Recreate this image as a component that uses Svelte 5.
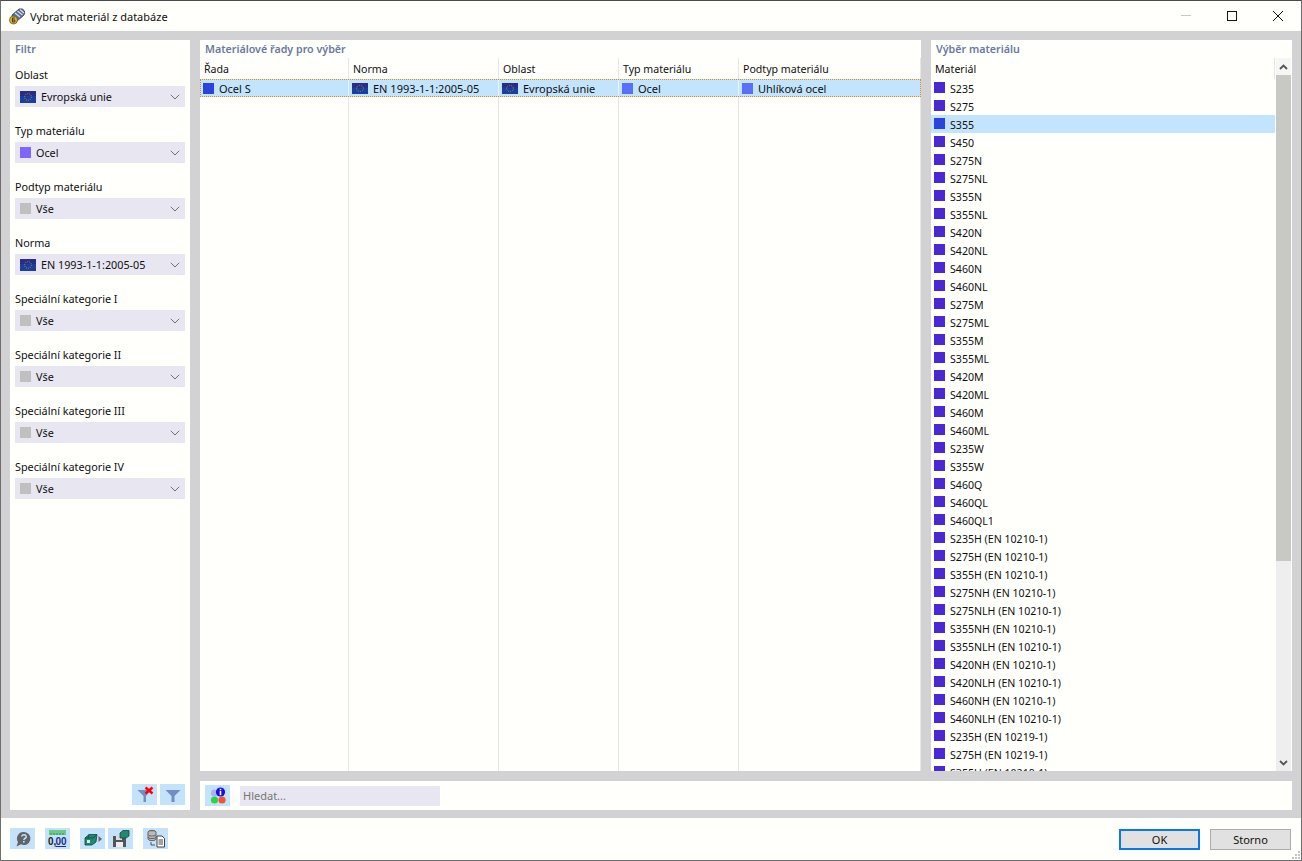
<script lang="ts">
	const filters = [
		{ label: 'Oblast', value: 'Evropská unie', icon: 'flag' },
		{ label: 'Typ materiálu', value: 'Ocel', icon: 'violet' },
		{ label: 'Podtyp materiálu', value: 'Vše', icon: 'grey' },
		{ label: 'Norma', value: 'EN 1993-1-1:2005-05', icon: 'flag' },
		{ label: 'Speciální kategorie I', value: 'Vše', icon: 'grey' },
		{ label: 'Speciální kategorie II', value: 'Vše', icon: 'grey' },
		{ label: 'Speciální kategorie III', value: 'Vše', icon: 'grey' },
		{ label: 'Speciální kategorie IV', value: 'Vše', icon: 'grey' }
	];

	const columns = [
		{ name: 'Řada', width: 149 },
		{ name: 'Norma', width: 150 },
		{ name: 'Oblast', width: 120 },
		{ name: 'Typ materiálu', width: 120 },
		{ name: 'Podtyp materiálu', width: 182 }
	];

	const materials = [
		'S235', 'S275', 'S355', 'S450', 'S275N', 'S275NL', 'S355N', 'S355NL', 'S420N', 'S420NL',
		'S460N', 'S460NL', 'S275M', 'S275ML', 'S355M', 'S355ML', 'S420M', 'S420ML', 'S460M',
		'S460ML', 'S235W', 'S355W', 'S460Q', 'S460QL', 'S460QL1', 'S235H (EN 10210-1)',
		'S275H (EN 10210-1)', 'S355H (EN 10210-1)', 'S275NH (EN 10210-1)', 'S275NLH (EN 10210-1)',
		'S355NH (EN 10210-1)', 'S355NLH (EN 10210-1)', 'S420NH (EN 10210-1)', 'S420NLH (EN 10210-1)',
		'S460NH (EN 10210-1)', 'S460NLH (EN 10210-1)', 'S235H (EN 10219-1)', 'S275H (EN 10219-1)',
		'S355H (EN 10219-1)'
	];
</script>

{#snippet flag(h = 12)}
	<svg class="flag" width="16" height={h} viewBox="0 0 16 12" preserveAspectRatio="none">
		<rect width="16" height="12" fill="#1c3f9e" />
		<rect width="16" height="5" fill="#2a2d86" />
		<circle cx="8" cy="6" r="3.4" fill="none" stroke="#93935c" stroke-width="1" stroke-dasharray="1 1.1" />
	</svg>
{/snippet}

<div class="window">
	<header class="titlebar">
		<svg class="appicon" width="18" height="18" viewBox="0 0 18 18">
			<path d="M4 8 L11 2 Q15 1 16.5 4 Q17.5 7 15 9 L9 14 L5 12 Z" fill="#5d6f92" stroke="#2f3a50" stroke-width="0.8" />
			<path d="M7 6 L12 10 M9.5 4 L14.5 8 M12 2.5 L16 6" stroke="#d7dfee" stroke-width="1.2" />
			<circle cx="5.5" cy="13" r="4" fill="#d9b23a" stroke="#6b5a1e" stroke-width="0.8" />
			<path d="M6.8 11 H4.5 V15 H6.8 V13 H4.5" fill="none" stroke="#453a14" stroke-width="1" />
		</svg>
		<span class="title">Vybrat materiál z databáze</span>
		<div class="winbtns">
			<svg width="12" height="12" viewBox="0 0 12 12"><path d="M1 5.5 H11" stroke="#c8c8c8" /></svg>
			<svg width="12" height="12" viewBox="0 0 12 12"><rect x="1.5" y="1.5" width="9" height="9" fill="none" stroke="#111" /></svg>
			<svg width="12" height="12" viewBox="0 0 12 12"><path d="M1 1 L11 11 M11 1 L1 11" stroke="#111" /></svg>
		</div>
	</header>

	<main class="body">
		<aside class="panel filter">
			<h2>Filtr</h2>
			<div class="filters">
				{#each filters as f}
					<div class="field">
						<span class="label">{f.label}</span>
						<div class="select">
							{#if f.icon === 'flag'}
								{@render flag()}
							{:else}
								<span class="swatch {f.icon}"></span>
							{/if}
							<span class="value">{f.value}</span>
							<svg class="chev" width="10" height="6" viewBox="0 0 10 6"><path d="M0.8 0.8 L5 5 L9.2 0.8" fill="none" stroke="#707070" stroke-width="1" /></svg>
						</div>
					</div>
				{/each}
			</div>
			<div class="filter-tools">
				<button class="tool" aria-label="Zrušit filtr">
					<svg width="20" height="20" viewBox="0 0 20 20">
						<path d="M2.5 5 H16 L11 11 V17 H8.5 V11 Z" fill="#6f8fc4" />
						<path d="M10.5 2.5 L17.5 8.5 M17.5 2.5 L10.5 8.5" stroke="#f00" stroke-width="2.4" />
					</svg>
				</button>
				<button class="tool" aria-label="Filtr">
					<svg width="20" height="20" viewBox="0 0 20 20"><path d="M2.5 5 H17.5 L11.5 11 V17 H8.5 V11 Z" fill="#6f8fc4" /></svg>
				</button>
			</div>
		</aside>

		<section class="panel series">
			<h2>Materiálové řady pro výběr</h2>
			<div class="table">
				<div class="thead">
					{#each columns as c}
						<div class="th" style:width="{c.width}px">{c.name}</div>
					{/each}
				</div>
				<div class="row">
					<div class="td first"><span class="swatch blue"></span><span class="gap">Ocel S</span></div>
					<div class="td" style:width="{columns[1].width}px">{@render flag(11)}<span class="gap">EN 1993-1-1:2005-05</span></div>
					<div class="td" style:width="{columns[2].width}px">{@render flag(11)}<span class="gap">Evropská unie</span></div>
					<div class="td" style:width="{columns[3].width}px"><span class="swatch steel"></span><span class="gap">Ocel</span></div>
					<div class="td last"><span class="swatch steel"></span><span class="gap">Uhlíková ocel</span></div>
				</div>
				<div class="grid-lines">
					{#each columns as c}
						<div class="gl" style:width="{c.width}px"></div>
					{/each}
				</div>
			</div>
		</section>

		<section class="panel picks">
			<h2>Výběr materiálu</h2>
			<div class="picks-body">
				<div class="list">
					<div class="th solo">Materiál</div>
					<div class="items">
						{#each materials as m, i}
							<div class="item" class:sel={i === 2}>
								<span class="swatch {i === 2 ? 'blue' : 'indigo'}"></span>
								<span>{m}</span>
							</div>
						{/each}
					</div>
				</div>
				<div class="scrollbar">
					<div class="sb-btn up">
						<svg width="9" height="6" viewBox="0 0 9 6"><path d="M1 5 L4.5 1.5 L8 5" fill="none" stroke="#555" stroke-width="1.8" /></svg>
					</div>
					<div class="thumb"></div>
					<div class="track"></div>
					<div class="sb-btn">
						<svg width="9" height="6" viewBox="0 0 9 6"><path d="M1 1 L4.5 4.5 L8 1" fill="none" stroke="#555" stroke-width="1.8" /></svg>
					</div>
				</div>
			</div>
		</section>

		<section class="panel search">
			<button class="tool" aria-label="Info">
				<svg width="20" height="20" viewBox="0 0 20 20">
					<circle cx="6.5" cy="7" r="3.6" fill="#a9b4ec" />
					<circle cx="6.5" cy="14" r="3.6" fill="#2fd24a" />
					<circle cx="14" cy="14" r="3.6" fill="#f4552f" />
					<circle cx="12.5" cy="6" r="4.6" fill="#1a0ee0" />
					<rect x="11.7" y="5" width="1.6" height="4.2" fill="#fff" />
					<rect x="11.7" y="2.8" width="1.6" height="1.4" fill="#fff" />
				</svg>
			</button>
			<div class="searchbox">Hledat...</div>
		</section>
	</main>

	<footer class="footer">
		<div class="tools">
			<button class="tool" aria-label="Nápověda">
				<svg width="20" height="20" viewBox="0 0 20 20">
					<path d="M11 3 A6.5 6.5 0 1 1 8 15.3 L3.5 17.5 L5 13 A6.5 6.5 0 0 1 11 3 Z" fill="#5f6468" />
					<path d="M8.8 7.5 A2.2 2 0 1 1 11.4 9.6 L10.8 11" fill="none" stroke="#c4e2fa" stroke-width="1.5" />
					<rect x="10" y="12" width="1.6" height="1.6" fill="#c4e2fa" />
				</svg>
			</button>
			<button class="tool units" aria-label="Jednotky">
				<svg width="22" height="20" viewBox="0 0 22 20">
					<rect x="2" y="1" width="17" height="5" fill="#6cc98a" />
					<path d="M4 4 V6 M7 4 V6 M10 4 V6 M13 4 V6 M16 4 V6" stroke="#3f8f5a" />
					<text x="1" y="15.5" class="num">0,</text>
					<text x="8.5" y="15.5" class="num under">00</text>
					<path d="M8.5 17.5 H19" stroke="#23308c" />
				</svg>
			</button>
			<button class="tool" aria-label="Načíst">
				<svg width="20" height="20" viewBox="0 0 20 20">
					<path d="M2 9 L6 5.5 H14 L13 13 L9 16 H2 Z" fill="#1f8a70" stroke="#10483a" stroke-width="0.8" />
					<path d="M6 5.5 L5 9 H2 M5 9 H10 L13.5 6" fill="none" stroke="#10483a" stroke-width="0.8" />
					<rect x="4" y="11" width="3" height="3" fill="#d8efe8" />
					<path d="M15.5 7 L19 10 L15.5 13 Z" fill="#666" />
				</svg>
			</button>
			<button class="tool" aria-label="Uložit">
				<svg width="20" height="20" viewBox="0 0 20 20">
					<path d="M2 7 H13 L15 9 V18 H2 Z" fill="#555" />
					<rect x="5" y="7" width="6" height="4" fill="#ddd" />
					<rect x="5" y="13" width="7" height="5" fill="#eee" />
					<path d="M9 4 L12 1.5 H18 V7 L15 9 H9 Z" fill="#1f8a70" stroke="#10483a" stroke-width="0.8" />
				</svg>
			</button>
			<button class="tool last" aria-label="Knihovna">
				<svg width="20" height="20" viewBox="0 0 20 20">
					<ellipse cx="6" cy="3" rx="4" ry="1.6" fill="#aaa" stroke="#666" />
					<path d="M2 3 V10 A4 1.6 0 0 0 10 10 V3" fill="#bbb" stroke="#666" />
					<path d="M2 5.5 A4 1.6 0 0 0 10 5.5 M2 8 A4 1.6 0 0 0 10 8" fill="none" stroke="#666" />
					<path d="M5 13 V16 H9" fill="none" stroke="#555" />
					<path d="M11 7 H16 L18.5 9.5 V18 H11 Z" fill="#fff" stroke="#444" />
					<path d="M12.5 11 H17 M12.5 13 H17 M12.5 15 H17" stroke="#444" />
				</svg>
			</button>
		</div>
		<div class="actions">
			<button class="btn ok">OK</button>
			<button class="btn">Storno</button>
		</div>
		<svg class="grip" width="10" height="10" viewBox="0 0 10 10">
			<path d="M7 1h2v2H7z M4 4h2v2H4z M7 4h2v2H7z M1 7h2v2H1z M4 7h2v2H4z M7 7h2v2H7z" fill="#c4c4c4" />
		</svg>
	</footer>
</div>

<style>
	:global(body) {
		margin: 0;
		background: #fff;
	}

	.window {
		width: 1302px;
		height: 861px;
		box-sizing: border-box;
		display: flex;
		flex-direction: column;
		border: 1px solid #6e6e6e;
		border-top-color: #4a4a4a;
		background: #fffffc;
		font-family: 'Noto Sans', 'Open Sans', sans-serif;
		font-size: 11px;
		color: #101010;
		overflow: hidden;
	}

	.titlebar {
		height: 30px;
		flex: none;
		display: flex;
		align-items: center;
		padding-left: 7px;
		gap: 4px;
		background: #fffffc;
	}

	.title {
		font-size: 11px;
	}

	.winbtns {
		margin-left: auto;
		display: flex;
		align-items: center;
		gap: 34px;
		padding-right: 17px;
	}

	.body {
		flex: none;
		background: #d2d2d4;
		padding: 9px 9px 8px;
		display: grid;
		grid-template-columns: 180px 721px 361px;
		grid-template-rows: 731px 29px;
		gap: 10px;
	}

	.panel {
		background: #fffffc;
		min-width: 0;
		min-height: 0;
	}

	h2 {
		margin: 0;
		font-size: 10.7px;
		font-weight: 600;
		color: #6a7a9c;
		line-height: 18px;
		padding-left: 5px;
	}

	.filter {
		grid-row: 1 / 3;
		display: flex;
		flex-direction: column;
		padding-bottom: 5px;
	}

	.filters {
		flex: 1;
		display: flex;
		flex-direction: column;
		gap: 15px;
		padding: 8px 5px 0;
		font-size: 10.8px;
	}

	.label {
		display: block;
		line-height: 18px;
		height: 20px;
	}

	.select {
		height: 21px;
		background: #e8e6f0;
		display: flex;
		align-items: center;
		padding: 0 5px;
		gap: 5px;
	}

	.chev {
		margin-left: auto;
	}

	.flag {
		flex: none;
	}

	.swatch {
		flex: none;
		display: inline-block;
		width: 11px;
		height: 11px;
	}

	.violet {
		background: #7f66ff;
	}

	.grey {
		background: #c0c0c0;
	}

	.blue {
		background: #2a44e0;
	}

	.steel {
		background: #5a70fa;
	}

	.indigo {
		background: #4a28d4;
	}

	.filter-tools {
		display: flex;
		justify-content: flex-end;
		gap: 3px;
		padding-right: 5px;
	}

	.tool {
		width: 25px;
		height: 21px;
		padding: 0;
		border: 0;
		background: #c4e2fa;
		display: flex;
		align-items: center;
		justify-content: center;
		flex: none;
	}

	.series {
		display: flex;
		flex-direction: column;
	}

	.table {
		flex: 1;
		min-height: 0;
		display: flex;
		flex-direction: column;
	}

	.thead {
		display: flex;
		height: 21px;
		flex: none;
	}

	.th {
		box-sizing: border-box;
		padding-left: 4px;
		line-height: 22px;
		font-size: 10.6px;
		border-right: 1px solid #e6e6e6;
	}

	.th.solo {
		height: 21px;
		flex: none;
	}

	.row {
		display: flex;
		box-sizing: border-box;
		height: 18px;
		flex: none;
		background: #c2e4fd;
		border: 1px dotted #e8861e;
	}

	.td {
		box-sizing: border-box;
		display: flex;
		align-items: center;
		padding-left: 3px;
		border-right: 1px solid #eef6fb;
	}

	.td.first {
		width: 148px;
		padding-left: 2px;
	}

	.td.last {
		width: 180px;
		border-right: 0;
	}

	.gap {
		margin-left: 5px;
	}

	.grid-lines {
		flex: 1;
		display: flex;
	}

	.gl {
		box-sizing: border-box;
		border-right: 1px solid #e6e6e6;
	}

	.picks {
		display: flex;
		flex-direction: column;
	}

	.picks-body {
		flex: 1;
		min-height: 0;
		display: flex;
		padding-right: 1px;
		gap: 1px;
	}

	.list {
		flex: 1;
		min-width: 0;
		display: flex;
		flex-direction: column;
	}

	.items {
		flex: 1;
		min-height: 0;
		overflow: hidden;
		font-size: 10.6px;
	}

	.item {
		height: 18px;
		box-sizing: border-box;
		padding: 1px 0 0 3px;
		display: flex;
		align-items: center;
		gap: 5px;
	}

	.item .swatch {
		align-self: flex-start;
		margin-top: 2px;
	}

	.item.sel {
		background: #c2e4fd;
	}

	.scrollbar {
		width: 15px;
		flex: none;
		display: flex;
		flex-direction: column;
		background: #eeeeee;
	}

	.sb-btn {
		height: 17px;
		flex: none;
		display: flex;
		align-items: center;
		justify-content: center;
	}

	.sb-btn.up {
		background: #f6f6f4;
	}

	.thumb {
		height: 486px;
		flex: none;
		background: #c8c8c5;
	}

	.track {
		flex: 1;
	}

	.search {
		grid-column: 2 / 4;
		display: flex;
		align-items: center;
		gap: 10px;
		padding-left: 5px;
	}

	.searchbox {
		width: 200px;
		height: 20px;
		background: #e8e6f0;
		color: #777;
		line-height: 20px;
		padding-left: 3px;
		box-sizing: border-box;
	}

	.footer {
		flex: 1;
		display: flex;
		align-items: flex-start;
		justify-content: space-between;
		padding: 10px 10px 0 9px;
		position: relative;
		background: #fffffc;
	}

	.tools {
		display: flex;
		gap: 10px;
	}

	.tools .tool:nth-child(4) {
		margin-left: -7px;
	}

	.num {
		font-family: 'Liberation Sans', sans-serif;
		font-size: 10px;
		font-weight: 600;
		fill: #222;
	}

	.under {
		fill: #23308c;
	}

	.actions {
		display: flex;
		gap: 10px;
		margin-top: 1px;
	}

	.btn {
		width: 81px;
		height: 21px;
		box-sizing: border-box;
		background: #e1e1e1;
		border: 1px solid #adadad;
		font: inherit;
		color: #101010;
		padding: 0;
	}

	.btn.ok {
		border: 2px solid #0a78e8;
	}

	.grip {
		position: absolute;
		right: 0;
		bottom: 0;
	}
</style>
